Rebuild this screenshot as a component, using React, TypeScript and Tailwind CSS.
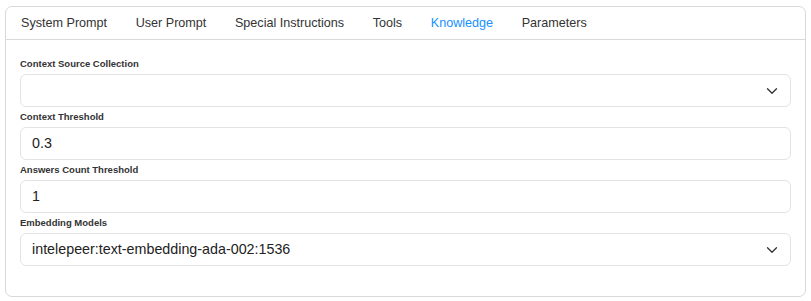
import React from 'react';
import { ChevronDown } from 'lucide-react';

const tabs = ['System Prompt', 'User Prompt', 'Special Instructions', 'Tools', 'Knowledge', 'Parameters'];

const Label: React.FC<{ text: string }> = ({ text }) => (
  <label className="block py-[3px] text-[9.5px] leading-[14px] font-bold text-[#333]">{text}</label>
);

const Select: React.FC<{ value?: string }> = ({ value = '' }) => (
  <div className="flex items-center justify-between h-[33px] pl-[11px] pr-[9px] border border-[#e3e3e3] rounded-[6px] bg-white text-[14.3px] text-[#222]">
    <span>{value}</span>
    <ChevronDown size={18} strokeWidth={1.7} className="text-[#333]" />
  </div>
);

const Input: React.FC<{ value: string }> = ({ value }) => (
  <div className="flex items-center h-[33px] px-[11px] border border-[#e3e3e3] rounded-[6px] bg-white text-[14.3px] text-[#222]">
    {value}
  </div>
);

export default function App() {
  return (
    <div className="w-[811px] h-[301px] bg-white pt-[6px] pl-[5px] pr-[5px]" style={{ fontFamily: '"Liberation Sans", Arial, sans-serif' }}>
      <div className="h-[291px] border border-[#d9d9d9] rounded-[7px]">
        <div className="flex h-[33px] items-center gap-[28.6px] pl-[15px] border-b border-[#d9d9d9] text-[12.6px] text-[#333]">
          {tabs.map((t) => (
            <span key={t} className={t === 'Knowledge' ? 'text-[#1890ff]' : ''}>
              {t}
            </span>
          ))}
        </div>
        <div className="pt-[14px] pl-[14px] pr-[14px]">
          <Label text="Context Source Collection" />
          <Select />
          <Label text="Context Threshold" />
          <Input value="0.3" />
          <Label text="Answers Count Threshold" />
          <Input value="1" />
          <Label text="Embedding Models" />
          <Select value="intelepeer:text-embedding-ada-002:1536" />
        </div>
      </div>
    </div>
  );
}
